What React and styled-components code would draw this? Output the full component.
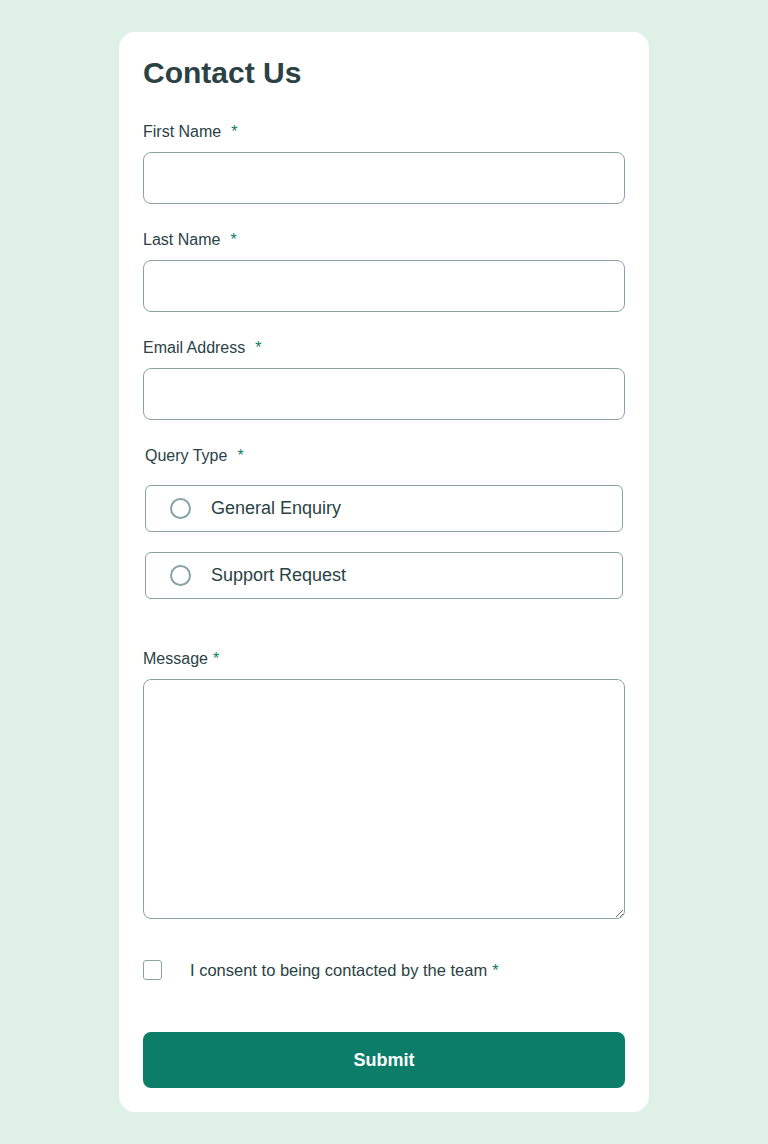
import React from "react";
import styled, { createGlobalStyle } from "styled-components";

const Global = createGlobalStyle`
  * { box-sizing: border-box; }
  html, body { margin: 0; padding: 0; }
  body {
    background: #dff1e7;
    font-family: "Liberation Sans", Arial, sans-serif;
    color: #2a4244;
  }
`;

const Page = styled.div`
  padding: 32px 0;
  display: flex;
  justify-content: center;
`;

const Card = styled.form`
  width: 530px;
  background: #ffffff;
  border-radius: 16px;
  padding: 24px;
  display: flex;
  flex-direction: column;
`;

const Title = styled.h1`
  margin: 0 0 33px;
  font-size: 30px;
  font-weight: 700;
  line-height: normal;
  color: #2a4244;
`;

const Field = styled.div`
  display: flex;
  flex-direction: column;
  margin-bottom: ${(p) => p.$mb ?? 27}px;
`;

const Label = styled.label`
  display: block;
  font-size: 16px;
  line-height: 18px;
  margin-bottom: 11px;
  color: #2a4244;
`;

const Star = styled.span`
  color: #0c7d69;
  margin-left: ${(p) => p.$gap ?? 10}px;
`;

const TextInput = styled.input`
  width: 100%;
  height: 52px;
  border: 1px solid #87a3a6;
  border-radius: 8px;
  background: #fff;
  font: inherit;
  font-size: 16px;
  padding: 0 16px;
  outline: none;
`;

const TextArea = styled.textarea`
  width: 100%;
  height: 240px;
  border: 1px solid #87a3a6;
  border-radius: 8px;
  background: #fff;
  font: inherit;
  font-size: 16px;
  padding: 12px 16px;
  outline: none;
  display: block;
`;

const Group = styled.div`
  padding: 0 2px;
  margin-bottom: 51px;
  display: flex;
  flex-direction: column;
`;

const GroupLabel = styled.div`
  font-size: 16px;
  line-height: 18px;
  margin-bottom: 20px;
  color: #2a4244;
`;

const Options = styled.div`
  display: flex;
  flex-direction: column;
  gap: 20px;
`;

const Option = styled.label`
  height: 47px;
  border: 1px solid #87a3a6;
  border-radius: 6px;
  display: flex;
  align-items: center;
  padding: 0 24px;
  gap: 20px;
  font-size: 18px;
  color: #2a4244;
  cursor: pointer;
`;

const Radio = styled.input.attrs({ type: "radio" })`
  appearance: none;
  margin: 0;
  width: 21px;
  height: 21px;
  border: 2px solid #87a3a6;
  border-radius: 50%;
  background: #fff;
  flex: none;
`;

const Consent = styled.label`
  display: flex;
  align-items: center;
  gap: 28px;
  height: 20px;
  margin-top: 41px;
  margin-bottom: 52px;
  font-size: 16.5px;
  color: #2a4244;
`;

const Check = styled.input.attrs({ type: "checkbox" })`
  appearance: none;
  margin: 0;
  width: 19px;
  height: 20px;
  border: 1.5px solid #87a3a6;
  border-radius: 3px;
  background: #fff;
  flex: none;
`;

const Submit = styled.button`
  height: 56px;
  width: 100%;
  border: none;
  border-radius: 8px;
  background: #0c7d69;
  color: #ffffff;
  font-family: "Liberation Sans", Arial, sans-serif;
  font-weight: 700;
  font-size: 18px;
  cursor: pointer;
`;

export default function App() {
  return (
    <>
      <Global />
      <Page>
        <Card onSubmit={(e) => e.preventDefault()}>
          <Title>Contact Us</Title>
          <Field>
            <Label htmlFor="fn">
              First Name<Star>*</Star>
            </Label>
            <TextInput id="fn" type="text" />
          </Field>
          <Field>
            <Label htmlFor="ln">
              Last Name<Star>*</Star>
            </Label>
            <TextInput id="ln" type="text" />
          </Field>
          <Field>
            <Label htmlFor="em">
              Email Address<Star>*</Star>
            </Label>
            <TextInput id="em" type="email" />
          </Field>
          <Group>
            <GroupLabel>
              Query Type<Star>*</Star>
            </GroupLabel>
            <Options>
              <Option>
                <Radio name="q" />
                General Enquiry
              </Option>
              <Option>
                <Radio name="q" />
                Support Request
              </Option>
            </Options>
          </Group>
          <Field $mb={0}>
            <Label htmlFor="msg">
              Message<Star $gap={5}>*</Star>
            </Label>
            <TextArea id="msg" />
          </Field>
          <Consent>
            <Check />
            <span>
              I consent to being contacted by the team<Star $gap={5}>*</Star>
            </span>
          </Consent>
          <Submit type="submit">Submit</Submit>
        </Card>
      </Page>
    </>
  );
}
